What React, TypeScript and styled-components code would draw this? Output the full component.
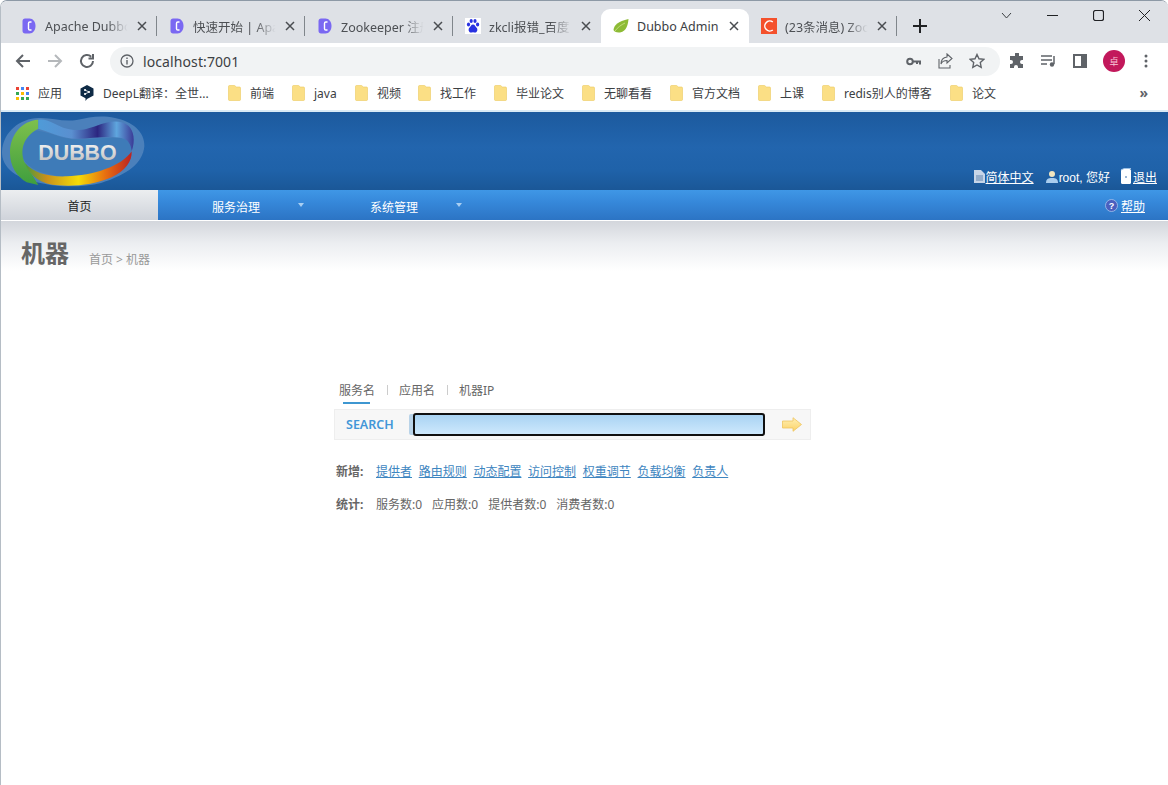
import React from 'react';
import styled, { createGlobalStyle } from 'styled-components';

const GlobalStyle = createGlobalStyle`
  html, body {
    margin: 0;
    padding: 0;
    height: 100%;
    background: #ffffff;
    overflow: hidden;
  }
  body {
    font-family: "Noto Sans", "Noto Sans CJK SC", sans-serif;
  }
  * {
    box-sizing: border-box;
  }
`;

const Window = styled.div`
  width: 1168px;
  height: 785px;
  display: flex;
  flex-direction: column;
  background: #ffffff;
  border-top: 1px solid #8d99a6;
  border-left: 1px solid #b5bdc5;
  border-radius: 7px 7px 0 0;
  overflow: hidden;
`;

const TabStrip = styled.div`
  height: 42px;
  flex: none;
  display: flex;
  align-items: flex-end;
  padding-left: 8px;
  background: #dee1e6;
  position: relative;
`;

const Tab = styled.div<{ $active?: boolean; $last?: boolean }>`
  width: 148px;
  height: 34px;
  flex: none;
  display: flex;
  align-items: center;
  padding: 0 10px 0 12px;
  font-size: 12.5px;
  color: ${(p) => (p.$active ? '#3c4043' : '#4d5054')};
  background: ${(p) => (p.$active ? '#ffffff' : 'transparent')};
  border-radius: ${(p) => (p.$active ? '9px 9px 0 0' : '0')};
  position: relative;
  &::after {
    content: '';
    display: ${(p) => (p.$active || p.$last ? 'none' : 'block')};
    position: absolute;
    right: 0;
    top: 7px;
    width: 1px;
    height: 20px;
    background: #80868b;
  }
`;

const TabIcon = styled.svg`
  width: 16px;
  height: 16px;
  flex: none;
`;

const TabTitle = styled.span<{ $clip?: boolean }>`
  flex: 1;
  min-width: 0;
  margin: 0 6px 0 8px;
  white-space: nowrap;
  ${(p) => (p.$clip ? `
    -webkit-mask-image: linear-gradient(to right, #000 72%, transparent 96%);
    mask-image: linear-gradient(to right, #000 72%, transparent 96%);
  ` : '')}
`;

const TabClose = styled.svg`
  width: 10px;
  height: 10px;
  flex: none;
`;

const NewTab = styled.svg`
  width: 14px;
  height: 14px;
  margin: 0 0 10px 16px;
  flex: none;
`;

const WindowButtons = styled.div`
  position: absolute;
  top: 9px;
  right: 18px;
  display: flex;
  gap: 35px;
  align-items: center;
`;

const ToolBar = styled.div`
  height: 36px;
  flex: none;
  display: flex;
  align-items: center;
  padding: 0 12px 0 13px;
  background: #ffffff;
`;

const NavIcon = styled.svg`
  width: 18px;
  height: 18px;
  flex: none;
  margin-right: 14px;
`;

const Omnibox = styled.div`
  width: 890px;
  height: 29px;
  flex: none;
  display: flex;
  align-items: center;
  padding: 0 10px;
  border-radius: 15px;
  background: #f1f3f4;
  font-size: 14px;
  color: #3c4043;
`;

const OmniText = styled.span`
  margin-left: 9px;
  flex: 1;
  letter-spacing: 0.1px;
`;

const OmniIcons = styled.div`
  display: flex;
  align-items: center;
  gap: 16px;
  margin-right: 5px;
`;

const ToolIcons = styled.div`
  display: flex;
  align-items: center;
  gap: 16px;
  margin-left: 9px;
`;

const Avatar = styled.div`
  width: 22px;
  height: 22px;
  border-radius: 50%;
  background: #c2185b;
  color: #f8c6d8;
  font-size: 9px;
  display: flex;
  align-items: center;
  justify-content: center;
`;

const MenuDots = styled.svg`
  width: 4px;
  height: 14px;
  margin-left: 3px;
`;

const BookmarkBar = styled.div`
  height: 33px;
  flex: none;
  display: flex;
  align-items: center;
  padding: 0 0 3px 15px;
  font-size: 12px;
  color: #3c4043;
  background: #ffffff;
  border-bottom: 2px solid #d9eaf5;
  position: relative;
`;

const Bookmark = styled.div<{ $width: number }>`
  width: ${(p) => p.$width}px;
  flex: none;
  display: flex;
  align-items: center;
  gap: 9px;
  white-space: nowrap;
`;

const MoreMarks = styled.span`
  position: absolute;
  right: 20px;
  top: 4px;
  font-size: 14px;
  font-weight: 700;
  color: #5f6368;
`;

const Folder = styled.svg`
  width: 13px;
  height: 16px;
  flex: none;
`;

const Header = styled.header`
  height: 78px;
  flex: none;
  display: flex;
  justify-content: space-between;
  align-items: flex-end;
  padding-right: 11px;
  background: linear-gradient(to bottom, #1c5a9e 0%, #2265ae 45%, #1f62a9 75%, #1a5797 100%);
  font-family: "Liberation Sans", "Noto Sans CJK SC", sans-serif;
  font-size: 12px;
  color: #ffffff;
`;

const Logo = styled.svg`
  width: 148px;
  height: 78px;
  flex: none;
  align-self: flex-start;
  margin-left: -1px;
`;

const UserBar = styled.div`
  display: flex;
  align-items: center;
  gap: 10px;
  height: 24px;
  margin-bottom: 2px;
`;

const UserItem = styled.span<{ $after?: number }>`
  display: flex;
  align-items: center;
  gap: 1px;
  margin-right: ${(p) => p.$after || 0}px;
`;

const WhiteLink = styled.a`
  color: #ffffff;
  text-decoration: underline;
`;

const NavBar = styled.nav`
  height: 31px;
  flex: none;
  display: flex;
  align-items: stretch;
  background: linear-gradient(to bottom, #3f97e6 0%, #3688da 40%, #2c74c4 100%);
  border-bottom: 1px solid #ffffff;
  font-family: "Noto Sans CJK SC", sans-serif;
  font-size: 12px;
  color: #ffffff;
`;

const NavItem = styled.div<{ $active?: boolean }>`
  width: ${(p) => (p.$active ? '157px' : '158px')};
  flex: none;
  display: flex;
  align-items: center;
  justify-content: center;
  position: relative;
  padding: ${(p) => (p.$active ? '0' : '2px 2px 0 0')};
  color: ${(p) => (p.$active ? '#222222' : '#ffffff')};
  background: ${(p) => (p.$active ? 'linear-gradient(to bottom, #eceef0 0%, #cfd3da 100%)' : 'transparent')};
`;

const NavCaret = styled.span`
  position: absolute;
  right: 12px;
  top: 13px;
  width: 0;
  height: 0;
  border-left: 3px solid transparent;
  border-right: 3px solid transparent;
  border-top: 4px solid #a9cff2;
`;

const HelpItem = styled.div`
  margin-left: auto;
  margin-right: 23px;
  display: flex;
  align-items: center;
  gap: 3px;
`;

const TitleBand = styled.div`
  height: 50px;
  flex: none;
  display: flex;
  align-items: flex-end;
  padding: 0 0 0 20px;
  background: linear-gradient(to bottom, #d3d6dc 0%, #eceef1 45%, #ffffff 100%);
`;

const PageTitle = styled.h1`
  margin: 0 0 2px;
  font-size: 24px;
  line-height: 32px;
  font-weight: 700;
  color: #666666;
`;

const Crumbs = styled.div`
  margin: 0 0 2px 20px;
  font-size: 12px;
  line-height: 18px;
  color: #999999;
`;

const SearchPanel = styled.section`
  width: 477px;
  margin: 107px 0 0 333px;
  flex: none;
`;

const SearchTabs = styled.div`
  display: flex;
  align-items: center;
  height: 24px;
  padding-left: 5px;
  font-size: 12px;
  color: #666666;
`;

const SearchTab = styled.span<{ $active?: boolean }>`
  position: relative;
  &::after {
    content: '';
    display: ${(p) => (p.$active ? 'block' : 'none')};
    position: absolute;
    left: 4px;
    right: 5px;
    bottom: -5px;
    height: 2px;
    background: #3e97d1;
  }
`;

const TabDivider = styled.span`
  width: 1px;
  height: 10px;
  margin: 0 11.5px;
  background: #cccccc;
`;

const SearchBox = styled.div`
  height: 31px;
  margin-top: 7px;
  display: flex;
  align-items: center;
  background: #f7f7f7;
  border: 1px solid #eeeeee;
`;

const SearchLabel = styled.span`
  width: 78px;
  flex: none;
  padding-left: 11px;
  font-size: 12.5px;
  font-weight: 600;
  color: #4296d8;
`;

const SearchInput = styled.input`
  width: 352px;
  height: 23px;
  flex: none;
  padding: 0 4px;
  border: 2px solid #101010;
  border-radius: 3px;
  outline: none;
  background: linear-gradient(to bottom, #a9d3f3 0%, #cde8fc 100%);
  box-shadow: -5px 0 0 -1px #b9d3e8;
`;

const GoArrow = styled.svg`
  width: 20px;
  height: 15px;
  flex: none;
  margin-left: 17px;
`;

const InfoRow = styled.div<{ $top: number }>`
  display: flex;
  align-items: center;
  height: 18px;
  margin-top: ${(p) => p.$top}px;
  padding-left: 2px;
  font-size: 12px;
  color: #666666;
`;

const InfoLabel = styled.span`
  width: 40px;
  flex: none;
  font-weight: 700;
`;

const InfoLink = styled.a`
  margin-right: 6.7px;
  color: #3d85c0;
  text-decoration: underline;
`;

const InfoStat = styled.span`
  margin-right: 10px;
  white-space: nowrap;
`;

const DubboIcon = () => (
  <TabIcon viewBox="0 0 16 16">
    <path d="M4 .5h4.500c3.500 0 6 3.200 6 7.500s-2.500 7.500-6 7.500H4c-1.500 0-2.500-1-2.500-2.500V3C1.500 1.500 2.500 .5 4 .5z" fill="#7a68f2" />
    <path d="M10.500 4H8.800C8 4 7.500 4.500 7.500 5.300v5.400c0 .8.500 1.300 1.300 1.300h1.700" fill="none" stroke="#ffffff" strokeWidth="1.400" />
  </TabIcon>
);

const BaiduIcon = () => (
  <TabIcon viewBox="0 0 16 16">
    <rect width="16" height="16" fill="#ffffff" />
    <ellipse cx="3.500" cy="6.500" rx="1.600" ry="2" fill="#2932e1" />
    <ellipse cx="6.200" cy="3" rx="1.600" ry="2" fill="#2932e1" />
    <ellipse cx="10" cy="3" rx="1.600" ry="2" fill="#2932e1" />
    <ellipse cx="12.600" cy="6.500" rx="1.600" ry="2" fill="#2932e1" />
    <path d="M8 6.500c-2 0-2.200 2-3.600 3.200C3 11 3.500 14.500 6 14.500c1 0 1.400-.3 2-.3s1 .3 2 .3c2.500 0 3-3.500 1.600-4.800C10.200 8.500 10 6.500 8 6.500z" fill="#2932e1" />
  </TabIcon>
);

const LeafIcon = () => (
  <TabIcon viewBox="0 0 16 16">
    <path d="M15.500 1C15 6 14 13 7 14.500 3.500 15 1 13.500 .5 12 1 7 5 3.500 15.500 1z" fill="#8dbb35" />
    <path d="M2 13C5 9 8 7 12 5" stroke="#d8e89a" strokeWidth="0.700" fill="none" />
  </TabIcon>
);

const CsdnIcon = () => (
  <TabIcon viewBox="0 0 16 16">
    <rect width="16" height="16" fill="#f4512c" />
    <path d="M11.800 4A5 5 0 1 0 11.800 12" fill="none" stroke="#ffffff" strokeWidth="1.500" />
  </TabIcon>
);

const CloseGlyph = () => (
  <TabClose viewBox="0 0 10 10">
    <path d="M1 1l8 8M9 1l-8 8" stroke="#4a4d51" strokeWidth="1.500" />
  </TabClose>
);

const FolderIcon = () => (
  <Folder viewBox="0 0 13 16">
    <path d="M.5 1.500A1 1 0 0 1 1.500.5h5l2 1.500h3a1 1 0 0 1 1 1v11.500a1 1 0 0 1-1 1h-10a1 1 0 0 1-1-1z" fill="#fbdf85" stroke="#ecc95f" strokeWidth="0.600" />
  </Folder>
);

const AppsGrid = () => (
  <svg width="13" height="13" viewBox="0 0 13 13">
    {[0, 1, 2].map((row) => [0, 1, 2].map((col) => (
      <rect
        key={`${row}-${col}`}
        x={col * 5}
        y={row * 5}
        width="3"
        height="3"
        fill={['#ea4335', '#4285f4', '#ea4335', '#34a853', '#fbbc04', '#4285f4', '#fbbc04', '#34a853', '#34a853'][row * 3 + col]}
      />
    )))}
  </svg>
);

const DeepLIcon = () => (
  <svg width="14" height="16" viewBox="0 0 13 16">
    <path d="M6.500 0L13 3.500v7L6.500 14 5 16v-2.800L0 10.500v-7z" fill="#0f2b46" />
    <circle cx="4.500" cy="5" r="1.100" fill="#ffffff" />
    <circle cx="4.500" cy="9" r="1.100" fill="#ffffff" />
    <circle cx="8.500" cy="7" r="1.100" fill="#ffffff" />
    <path d="M4.500 5l4 2-4 2" stroke="#ffffff" fill="none" strokeWidth="0.800" />
  </svg>
);

// viewBox follows the 3x crop of the logo, so the curves can be read off it directly
const DubboLogo = () => (
  <Logo viewBox="0 12 444 234">
    <defs>
      <linearGradient id="ringBottom" x1="0" y1="0" x2="1" y2="0">
        <stop offset="0" stopColor="#4a9a3c" />
        <stop offset="0.2" stopColor="#c8901c" />
        <stop offset="0.5" stopColor="#f4dc08" />
        <stop offset="0.75" stopColor="#e8700f" />
        <stop offset="1" stopColor="#bb2222" />
      </linearGradient>
      <linearGradient id="ringTop" x1="0" y1="0" x2="1" y2="0">
        <stop offset="0" stopColor="#4f9bd8" />
        <stop offset="0.35" stopColor="#5a8fd0" />
        <stop offset="0.62" stopColor="#2c2680" />
        <stop offset="0.82" stopColor="#5fa6de" />
        <stop offset="1" stopColor="#3a3a96" />
      </linearGradient>
      <linearGradient id="ringLeft" x1="0" y1="0" x2="0" y2="1">
        <stop offset="0" stopColor="#7ec04c" />
        <stop offset="1" stopColor="#3f9e3e" />
      </linearGradient>
      <linearGradient id="letters" x1="0" y1="0" x2="0" y2="1">
        <stop offset="0" stopColor="#f6f6f6" />
        <stop offset="1" stopColor="#b8b8b8" />
      </linearGradient>
    </defs>
    <path d="M6 130C10 70 60 32 115 30c40-2 70 12 115 6 40-8 70-16 115-6 50 10 90 40 88 85-4 50-50 85-130 110-50 12-120 14-170 2C50 215 4 180 6 130z" fill="#4b80bb" />
    <path d="M65 130c0-40 25-65 50-62 40 6 70 26 120 26 45 0 100-10 140-2 20 6 22 30 14 55-30 40-90 60-170 60-95-2-154-30-154-77z" fill="#3e7bb8" />
    <path d="M115 35C65 38 30 80 30 135c0 40 20 70 50 88l35 8-40-66C62 140 60 90 115 62z" fill="url(#ringLeft)" />
    <path d="M75 165c25 30 70 42 125 40 80-2 165-30 195-75 2 30-20 60-60 78-50 22-110 28-160 24-50-3-85-25-100-67z" fill="url(#ringBottom)" />
    <path d="M115 35c30-4 50 16 75 24 40 12 60 8 100-6 35-14 70-20 95 0 16 14 22 45 10 77-2-20-10-36-30-40-40-8-90 2-135 2-40 0-70-16-115-30z" fill="url(#ringTop)" />
    <text
      x="115"
      y="157"
      fontFamily="'Liberation Sans', sans-serif"
      fontSize="64"
      fontWeight="700"
      textLength="235"
      lengthAdjust="spacingAndGlyphs"
      fill="url(#letters)"
    >
      DUBBO
    </text>
  </Logo>
);

const SmallDoc = () => (
  <svg width="11" height="13" viewBox="0 0 11 13">
    <path d="M0 0h7l4 4v9H0z" fill="#c6d5e8" />
    <path d="M2 6h7M2 8h7M2 10h7" stroke="#5f83ad" strokeWidth="1" />
  </svg>
);

const SmallUser = () => (
  <svg width="12" height="13" viewBox="0 0 12 13">
    <circle cx="6" cy="4" r="3" fill="#f0e6c0" />
    <path d="M0 13c0-4 2-5 6-5s6 1 6 5z" fill="#a9cdee" />
  </svg>
);

const SmallDoor = () => (
  <svg width="12" height="17" viewBox="0 0 12 17">
    <rect x="1" y="1" width="10" height="15" rx="1.500" fill="#ffffff" />
    <path d="M1 2L4 .5h7" stroke="#9cc0e4" fill="none" />
    <circle cx="6" cy="9" r="0.800" fill="#1c5a9e" />
  </svg>
);

const HelpIcon = () => (
  <svg width="13" height="13" viewBox="0 0 13 13">
    <circle cx="6.500" cy="6.500" r="6" fill="#4a5fbf" stroke="#a8c4ec" strokeWidth="0.800" />
    <text x="6.500" y="9.800" textAnchor="middle" fontSize="9" fontWeight="700" fontFamily="'Liberation Sans', sans-serif" fill="#ffffff">?</text>
  </svg>
);

const tabs = [
  { icon: <DubboIcon />, title: 'Apache Dubbo', clip: true },
  { icon: <DubboIcon />, title: '快速开始 | Apa', clip: true },
  { icon: <DubboIcon />, title: 'Zookeeper 注册', clip: true },
  { icon: <BaiduIcon />, title: 'zkcli报错_百度', clip: true },
  { icon: <LeafIcon />, title: 'Dubbo Admin', active: true },
  { icon: <CsdnIcon />, title: '(23条消息) Zoo', clip: true },
];

const bookmarks = [
  { name: '前端', width: 64 },
  { name: 'java', width: 63 },
  { name: '视频', width: 63 },
  { name: '找工作', width: 76 },
  { name: '毕业论文', width: 88 },
  { name: '无聊看看', width: 88 },
  { name: '官方文档', width: 88 },
  { name: '上课', width: 64 },
  { name: 'redis别人的博客', width: 128 },
  { name: '论文', width: 60 },
];

const addLinks = ['提供者', '路由规则', '动态配置', '访问控制', '权重调节', '负载均衡', '负责人'];
const stats = ['服务数:0', '应用数:0', '提供者数:0', '消费者数:0'];

function App(): React.ReactElement {
  return (
    <Window>
      <GlobalStyle />
      <TabStrip>
        {tabs.map((tab, i) => (
          <Tab key={tab.title} $active={tab.active} $last={i === 3}>
            {tab.icon}
            <TabTitle $clip={tab.clip}>{tab.title}</TabTitle>
            <CloseGlyph />
          </Tab>
        ))}
        <NewTab viewBox="0 0 14 14">
          <path d="M7 0v14M0 7h14" stroke="#202124" strokeWidth="2" />
        </NewTab>
        <WindowButtons>
          <svg width="11" height="11" viewBox="0 0 11 11"><path d="M1 3l4.500 5L10 3" stroke="#3c4043" fill="none" /></svg>
          <svg width="11" height="11" viewBox="0 0 11 11"><path d="M0 5.500h11" stroke="#202124" strokeWidth="1.200" /></svg>
          <svg width="11" height="11" viewBox="0 0 11 11"><rect x="0.500" y="0.500" width="10" height="10" rx="2" stroke="#202124" strokeWidth="1.200" fill="none" /></svg>
          <svg width="11" height="11" viewBox="0 0 11 11"><path d="M0 0l11 11M11 0L0 11" stroke="#202124" /></svg>
        </WindowButtons>
      </TabStrip>

      <ToolBar>
        <NavIcon viewBox="0 0 18 18"><path d="M16 9H3M9 3L3 9l6 6" stroke="#5f6368" strokeWidth="2" fill="none" /></NavIcon>
        <NavIcon viewBox="0 0 18 18"><path d="M2 9h13M9 3l6 6-6 6" stroke="#b5b8bb" strokeWidth="2" fill="none" /></NavIcon>
        <NavIcon viewBox="0 0 18 18"><path d="M15 9a6 6 0 1 1-1.800-4.300M15 2v4.500h-4.500" stroke="#5f6368" strokeWidth="2" fill="none" /></NavIcon>
        <Omnibox>
          <svg width="14" height="14" viewBox="0 0 14 14">
            <circle cx="7" cy="7" r="6" stroke="#5f6368" strokeWidth="1.300" fill="none" />
            <path d="M7 6v4.500M7 3.500v1.400" stroke="#5f6368" strokeWidth="1.400" />
          </svg>
          <OmniText>localhost:7001</OmniText>
          <OmniIcons>
            <svg width="15" height="15" viewBox="0 0 15 15">
              <circle cx="4" cy="7.500" r="2.800" stroke="#5f6368" strokeWidth="2" fill="none" />
              <path d="M6.500 7.500H14v3M11 7.500v2.500" stroke="#5f6368" strokeWidth="2" fill="none" />
            </svg>
            <svg width="16" height="16" viewBox="0 0 16 16">
              <path d="M10 1l5 4.500L10 10V7.500C7 7.500 5 8.500 4 11c0-4 2-6.500 6-7zM2 6v9h11v-3" stroke="#5f6368" strokeWidth="1.100" fill="none" />
            </svg>
            <svg width="16" height="16" viewBox="0 0 16 16">
              <path d="M8 1.500l2 4.300 4.700.6-3.400 3.200.9 4.700L8 12l-4.200 2.300.9-4.700L1.300 6.400 6 5.800z" stroke="#5f6368" strokeWidth="1.400" fill="none" />
            </svg>
          </OmniIcons>
        </Omnibox>
        <ToolIcons>
          <svg width="16" height="16" viewBox="0 0 16 16">
            <path d="M6 1a2 2 0 0 1 4 0v2h4v4h-1a2 2 0 0 0 0 4h1v4H9v-1a2 2 0 0 0-4 0v1H1v-4h1a2 2 0 0 0 0-4H1V3h5z" fill="#5f6368" />
          </svg>
          <svg width="16" height="14" viewBox="0 0 16 14">
            <path d="M0 2h11M0 6h11M0 10h6" stroke="#5f6368" strokeWidth="1.500" />
            <path d="M13 2v8" stroke="#5f6368" strokeWidth="1.500" />
            <circle cx="11" cy="10.500" r="2.200" fill="#5f6368" />
          </svg>
          <svg width="14" height="14" viewBox="0 0 14 14">
            <rect x="1" y="1" width="12" height="12" stroke="#5f6368" strokeWidth="2" fill="none" />
            <rect x="8" y="1" width="5" height="12" fill="#5f6368" />
          </svg>
          <Avatar>卓</Avatar>
          <MenuDots viewBox="0 0 4 14">
            <circle cx="2" cy="2" r="1.500" fill="#5f6368" />
            <circle cx="2" cy="7" r="1.500" fill="#5f6368" />
            <circle cx="2" cy="12" r="1.500" fill="#5f6368" />
          </MenuDots>
        </ToolIcons>
      </ToolBar>

      <BookmarkBar>
        <Bookmark $width={64}><AppsGrid />应用</Bookmark>
        <Bookmark $width={148}><DeepLIcon />DeepL翻译：全世...</Bookmark>
        {bookmarks.map((mark) => (
          <Bookmark key={mark.name} $width={mark.width}>
            <FolderIcon />
            {mark.name}
          </Bookmark>
        ))}
        <MoreMarks>»</MoreMarks>
      </BookmarkBar>

      <Header>
        <DubboLogo />
        <UserBar>
          <UserItem $after={2}><SmallDoc /><WhiteLink href="#">简体中文</WhiteLink></UserItem>
          <UserItem><SmallUser />root, 您好</UserItem>
          <UserItem><SmallDoor /><WhiteLink href="#">退出</WhiteLink></UserItem>
        </UserBar>
      </Header>

      <NavBar>
        <NavItem $active>首页</NavItem>
        <NavItem>服务治理<NavCaret /></NavItem>
        <NavItem>系统管理<NavCaret /></NavItem>
        <HelpItem><HelpIcon /><WhiteLink href="#">帮助</WhiteLink></HelpItem>
      </NavBar>

      <TitleBand>
        <PageTitle>机器</PageTitle>
        <Crumbs>首页 &gt; 机器</Crumbs>
      </TitleBand>

      <SearchPanel>
        <SearchTabs>
          <SearchTab $active>服务名</SearchTab>
          <TabDivider />
          <SearchTab>应用名</SearchTab>
          <TabDivider />
          <SearchTab>机器IP</SearchTab>
        </SearchTabs>
        <SearchBox>
          <SearchLabel>SEARCH</SearchLabel>
          <SearchInput />
          <GoArrow viewBox="0 0 20 15">
            <defs>
              <linearGradient id="goFill" x1="0" y1="0" x2="0" y2="1">
                <stop offset="0" stopColor="#fff0b4" />
                <stop offset="1" stopColor="#fbd268" />
              </linearGradient>
            </defs>
            <path d="M.5 4H11V.7l8.500 6.800L11 14.300V11H.5z" fill="url(#goFill)" stroke="#efc45e" strokeWidth="0.800" />
          </GoArrow>
        </SearchBox>
        <InfoRow $top={22}>
          <InfoLabel>新增:</InfoLabel>
          {addLinks.map((label) => <InfoLink key={label} href="#">{label}</InfoLink>)}
        </InfoRow>
        <InfoRow $top={15}>
          <InfoLabel>统计:</InfoLabel>
          {stats.map((label) => <InfoStat key={label}>{label}</InfoStat>)}
        </InfoRow>
      </SearchPanel>
    </Window>
  );
}

export default App;
